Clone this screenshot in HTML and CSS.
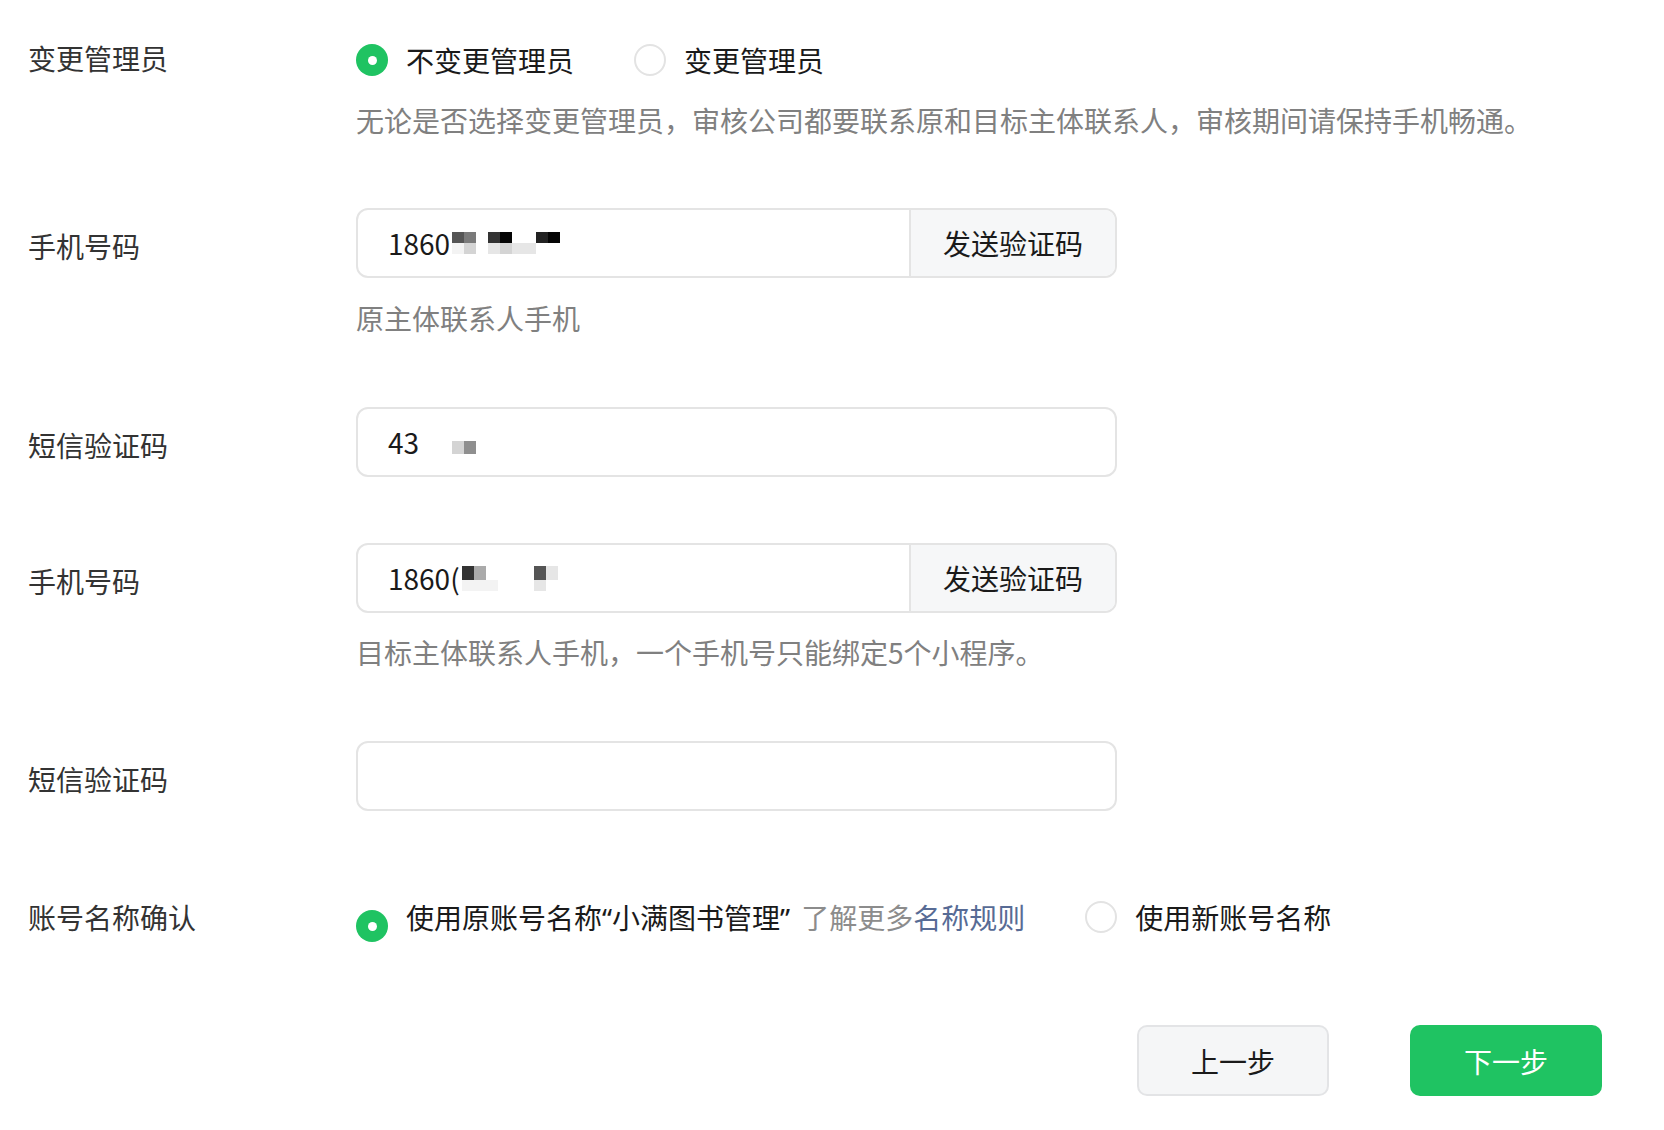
FILE: index.html
```html
<!DOCTYPE html>
<html lang="zh-CN">
<head>
<meta charset="utf-8">
<title>变更管理员</title>
<link rel="stylesheet" href="styles.css">
</head>
<body>
<div class="page">
  <div class="item item-first">
    <div class="label">变更管理员</div>
    <div class="content">
      <div class="radios radios-first">
        <label class="radio"><span class="dot on"></span><span>不变更管理员</span></label>
        <label class="radio"><span class="dot"></span><span>变更管理员</span></label>
      </div>
      <div class="help">无论是否选择变更管理员，审核公司都要联系原和目标主体联系人，审核期间请保持手机畅通。</div>
    </div>
  </div>

  <div class="item item-2">
    <div class="label label-field">手机号码</div>
    <div class="content">
      <div class="field">
        <div class="value">1860<span class="mosaic m2"><i class="k3"></i><i class="k9"></i><i class="k4"></i><i class="k7"></i><i></i><i></i><i class="k2"></i><i class="k8"></i><i class="k0"></i><i class="k7"></i><i></i><i class="k8"></i><i></i><i class="k8"></i><i class="k1"></i><i></i><i class="k0"></i><i></i></span></div>
        <div class="send">发送验证码</div>
      </div>
      <div class="help help-field">原主体联系人手机</div>
    </div>
  </div>

  <div class="item item-3">
    <div class="label label-field">短信验证码</div>
    <div class="content">
      <div class="field">
        <div class="value">43<span class="mosaic m3"><i></i><i class="k7"></i><i></i><i class="k5"></i></span></div>
      </div>
    </div>
  </div>

  <div class="item item-4">
    <div class="label label-field">手机号码</div>
    <div class="content">
      <div class="field">
        <div class="value">1860(<span class="mosaic m4"><i class="k2"></i><i class="k9"></i><i class="k6"></i><i class="k9"></i><i></i><i class="k9"></i><i></i><i></i><i></i><i></i><i></i><i></i><i class="k3"></i><i class="k8"></i><i class="k8"></i><i></i></span></div>
        <div class="send">发送验证码</div>
      </div>
      <div class="help help-field2">目标主体联系人手机，一个手机号只能绑定5个小程序。</div>
    </div>
  </div>

  <div class="item item-5">
    <div class="label label-field">短信验证码</div>
    <div class="content">
      <div class="field">
        <div class="value"></div>
      </div>
    </div>
  </div>

  <div class="item item-6">
    <div class="label">账号名称确认</div>
    <div class="content">
      <div class="radios">
        <label class="radio"><span class="dot on low"></span><span>使用原账号名称<span class="q">“</span>小满图书管理<span class="q">”</span></span><span class="more">了解更多<a class="link">名称规则</a></span></label>
        <label class="radio radio-gap"><span class="dot"></span><span>使用新账号名称</span></label>
      </div>
    </div>
  </div>

  <div class="actions">
    <button class="btn btn-default">上一步</button>
    <button class="btn btn-primary">下一步</button>
  </div>
</div>
</body>
</html>
```

FILE: styles.css
```css
html, body {
  margin: 0;
  padding: 0;
  background: #ffffff;
}

body {
  font-family: "Noto Sans CJK SC", "Noto Sans", sans-serif;
  font-size: 28px;
  color: #1a1a1a;
}

.page {
  padding: 38px 62px 0 28px;
}

.item {
  display: flex;
  align-items: flex-start;
}

.item-2 { margin-top: 68px; }
.item-3 { margin-top: 69px; }
.item-4 { margin-top: 66px; }
.item-5 { margin-top: 69px; }
.item-6 { margin-top: 86px; }

.label {
  width: 328px;
  flex: none;
  line-height: 40px;
  color: #333333;
}

.label-field {
  padding-top: 18px;
}

.content {
  flex: 1;
}

.radios {
  display: flex;
  align-items: center;
  height: 40px;
}

.radios-first {
  margin-top: 2px;
}

.radio {
  display: flex;
  align-items: center;
  line-height: 40px;
  white-space: nowrap;
}

.radio + .radio {
  margin-left: 60px;
}

.radio.radio-gap {
  margin-left: 60px;
}

.dot {
  width: 32px;
  height: 32px;
  box-sizing: border-box;
  border-radius: 50%;
  border: 2px solid #e3e3e3;
  margin-right: 18px;
  flex: none;
  display: flex;
  align-items: center;
  justify-content: center;
}

.dot.on {
  background: #1fc362;
  border: none;
}

.dot.on::after {
  content: "";
  width: 9px;
  height: 9px;
  border-radius: 50%;
  background: #ffffff;
}

.dot.low {
  margin-top: 18px;
}

.q {
  font-family: "Noto Sans", "Liberation Sans", sans-serif;
}

.more {
  margin-left: 11px;
  color: #8c8c8c;
}

.link {
  color: #576b95;
  text-decoration: none;
}

.help {
  margin-top: 20px;
  line-height: 40px;
  color: #808080;
}

.help-field {
  margin-top: 20px;
}

.help-field2 {
  margin-top: 19px;
}

.field {
  display: flex;
  width: 761px;
  height: 70px;
  box-sizing: border-box;
  border: 2px solid #e4e4e4;
  border-radius: 12px;
  overflow: hidden;
  background: #ffffff;
}

.value {
  flex: 1;
  display: flex;
  align-items: baseline;
  padding-left: 30px;
  line-height: 66px;
  color: #1a1a1a;
}

.send {
  width: 204px;
  flex: none;
  border-left: 2px solid #e4e4e4;
  background: #f6f7f8;
  display: flex;
  align-items: center;
  justify-content: center;
  color: #1a1a1a;
}

.mosaic {
  display: inline-grid;
  grid-auto-flow: column;
  grid-template-rows: 11px 11px;
  grid-auto-columns: 12px;
  align-self: center;
}

.mosaic i {
  display: block;
}

.m2 {
  margin-left: 2px;
}

.m3 {
  margin-left: 33px;
  grid-template-rows: 11px 13px;
}

.m4 {
  margin-left: 2px;
  grid-template-rows: 14px 11px;
}

.k0 { background: #050505; }
.k1 { background: #222222; }
.k2 { background: #333333; }
.k3 { background: #555555; }
.k4 { background: #7a7a7a; }
.k5 { background: #8f8f8f; }
.k6 { background: #aaaaaa; }
.k7 { background: #d4d4d4; }
.k8 { background: #e6e6e6; }
.k9 { background: #f3f3f3; }

.actions {
  display: flex;
  justify-content: flex-end;
  gap: 81px;
  margin-top: 88px;
}

.btn {
  width: 192px;
  height: 71px;
  box-sizing: border-box;
  border-radius: 10px;
  font-family: "Noto Sans CJK SC", "Noto Sans", sans-serif;
  font-size: 28px;
  cursor: pointer;
}

.btn-default {
  background: #f5f6f7;
  border: 2px solid #e3e4e6;
  color: #1a1a1a;
}

.btn-primary {
  background: #1fc362;
  border: none;
  color: #ffffff;
}
```
